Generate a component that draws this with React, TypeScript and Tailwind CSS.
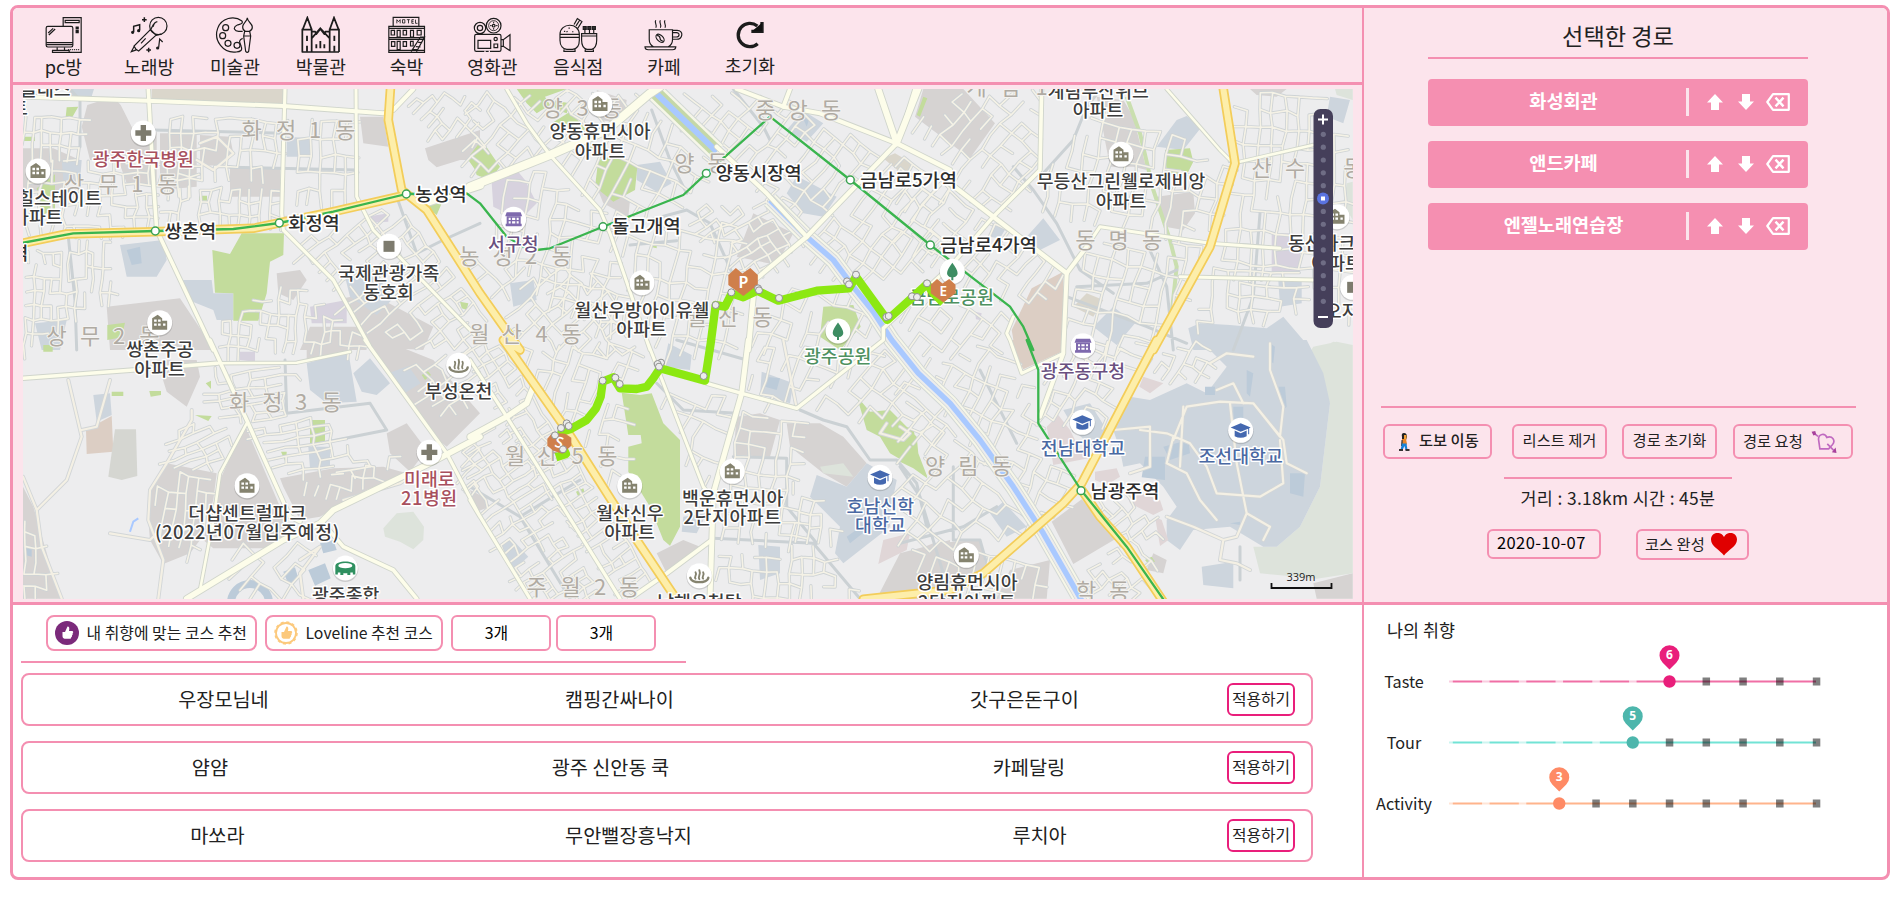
import React from "react";

const FONT = "font-['Noto_Sans_CJK_KR','Noto_Sans',sans-serif]";

/* ---------- map geometry ---------- */

// Map data is digitised per sheet, three units to a pixel; each sheet has its own origin.
const SHEETS: Record<string, [number, number]> = {
  A: [0, 80],
  B: [470, 80],
  C: [900, 80],
  D: [0, 340],
  E: [470, 340],
  F: [900, 340],
};

type Pt = [number, number];

function pts(src: string): Pt[] {
  let o = SHEETS.A;
  const out: Pt[] = [];
  for (const tok of src.trim().split(/\s+/)) {
    if (SHEETS[tok]) {
      o = SHEETS[tok];
      continue;
    }
    const [x, y] = tok.split(",").map(Number);
    out.push([o[0] + x / 3, o[1] + y / 3]);
  }
  return out;
}

const line = (src: string) =>
  "M" + pts(src).map((p) => `${p[0].toFixed(1)} ${p[1].toFixed(1)}`).join("L");
const area = (src: string) => line(src) + "Z";

const AREAS: [string, string[]][] = [
  ["#dad6cb", ["A 455,27 850,27 850,75 455,62", "C 520,680 560,640 610,660 580,710", "B 1240,235 1275,220 1335,255 1300,285"]],
  [
    "#d6d3d2",
    [
      "A 262,75 340,50 362,75 400,150 470,155 470,320 380,310 355,240 270,240 245,140",
      "A 480,160 590,160 590,320 480,330",
      "A 600,165 690,170 700,220 670,255 600,258",
      "A 690,262 840,265 840,350 690,350",
      "A 1080,110 1150,110 1165,200 1090,190",
      "A 1275,205 1440,150 1440,240 1380,240 1310,262 1285,240",
      "A 69,205 160,205 240,240 180,330 69,330",
      "A 320,680 540,655 610,760 640,810 330,810",
      "A 830,580 900,570 920,600 880,660 835,640",
      "A 1030,655 1110,640 1300,740 1270,810 1110,800",
      "A 930,740 1080,740 1100,810 900,810",
      "D 470,60 590,60 600,110 560,200 500,155",
      "D 920,0 1080,0 1040,36 920,60",
      "D 1100,20 1150,0 1300,60 1440,220 1340,320 1290,280 1200,130",
      "D 735,255 840,500 860,580 800,625 640,625 610,600 660,420 700,330",
      "D 840,415 1000,385 1150,380 1220,400 1100,450 960,530 900,540 850,440",
      "D 448,450 500,370 650,400 640,480 600,600 570,640 490,672 450,600 443,520",
      "D 1160,280 1220,250 1280,330 1230,395 1170,340",
      "D 69,440 100,500 180,776 69,776",
      "B 0,155 30,180 20,230 0,245",
      "B 380,320 420,345 480,360 475,410 400,370",
      "B 850,400 970,460 920,555 800,530",
      "C 70,27 190,27 285,130 210,235 45,110",
      "C 590,50 670,60 700,110 740,270 700,260 630,260",
      "C 770,350 880,335 885,400 850,450 795,440",
      "C 1050,27 1160,27 1130,50 1070,45",
      "E 800,230 870,220 930,240 900,350 790,345",
      "E 950,250 1050,250 1120,290 1190,370 1130,440 1060,400 960,320",
      "E 560,640 640,600 690,620 590,700",
      "E 0,450 40,470 60,500 20,515",
      "E 1290,640 1440,600 1440,776 1220,776",
      "F 455,545 545,478 650,595 520,672",
      "F 0,650 100,610 240,600 260,690 150,770 0,770",
      "F 330,690 450,660 440,776 290,776",
      "F 760,640 800,660 790,700 740,690",
      "F 1240,730 1358,700 1358,776 1250,776",
      "B 380,30 470,60 460,130 390,120",
    ],
  ],
  [
    "#dde3db",
    [
      "F 1215,60 1240,20 1310,5 1358,15 1358,700 1250,716 1080,700 1060,620 1130,620 1200,560 1260,440 1290,190",
      "C 1305,27 1358,27 1358,60 1310,45",
      "C 1340,310 1358,305 1358,420 1330,370",
      "C 1250,810 1300,785 1358,795 1358,810",
      "D 1150,565 1190,520 1240,515 1272,560 1270,600 1240,628 1200,605 1155,590",
      "E 1050,380 1120,370 1150,410 1060,400",
    ],
  ],
  [
    "#cdd5dd",
    [
      "C 865,745 900,730 990,735 1100,745 1150,710 1235,810 880,810",
      "F 900,0 1220,0 1270,100 1290,190 1260,440 1200,560 1130,620 1090,620 990,560 880,570 840,630 800,600 800,540 830,500 790,440 720,370 670,380 660,330 640,270 690,170 750,180 860,130 920,160 980,80",
      "A 360,495 490,480 500,540 470,590 380,590",
      "A 545,600 635,600 640,640 700,640 700,720 650,720 640,690 565,660",
      "A 860,170 935,175 930,230 860,230",
      "A 185,240 245,240 240,305 190,300",
      "A 200,27 282,27 270,65 210,55",
      "A 1035,590 1110,570 1185,650 1130,705 1050,650",
      "A 105,730 200,720 180,810 125,810",
      "D 920,70 1045,35 1070,185 980,190 930,150",
      "D 1060,100 1110,55 1170,130 1130,165 1085,155",
      "D 1165,100 1225,78 1262,130 1205,165",
      "D 925,320 990,320 990,380 930,385",
      "D 280,165 330,160 335,225 290,245",
      "B 500,255 570,245 605,310 560,335 500,300",
      "B 950,150 1000,92 1060,130 1010,185",
      "B 950,340 980,288 1100,350 1060,410 1000,400",
      "B 120,610 190,600 200,660 130,680",
      "C 770,200 830,120 860,108 905,140 850,210",
      "C 265,470 290,430 320,440 300,475",
      "C 380,470 430,415 480,480 420,510",
      "C 1135,600 1205,600 1205,670 1140,680",
      "C 580,740 640,680 705,730 650,795",
      "C 1290,50 1350,60 1330,130 1280,110",
      "E 595,10 665,45 660,90 580,80",
      "E 875,95 970,130 960,190 870,165",
      "E 1040,405 1130,440 1190,370 1280,420 1260,520 1260,560 1120,670 1095,640 1110,560 1020,470",
      "E 865,615 930,620 930,700 870,720",
      "E 120,590 175,650 130,690 88,620",
      "E 640,530 710,520 680,580 635,575",
      "F 270,520 310,485 380,560 320,590",
      "F 905,680 1000,665 1000,745 910,735",
      "F 490,210 570,190 620,270 590,330 530,280",
    ],
  ],
  ["#dccec4", ["C 395,625 490,575 490,810 345,810 335,750", "F 325,0 485,0 485,35 370,88", "D 258,270 335,228 340,335 260,342"]],
  ["#e0d6d7", ["F 440,260 475,225 510,270 540,330 590,350 460,375", "F 585,395 650,385 660,410 620,435 585,420", "F 670,440 780,480 790,510 760,525 690,490", "F 730,110 790,130 750,160 718,140", "F 765,530 785,540 805,600 780,618", "E 1240,600 1320,580 1310,630 1225,672"]],
  ["#d7d2de", ["B 65,310 140,270 165,300 200,370 150,420 70,380", "C 1115,460 1200,460 1200,580 1115,580", "A 930,680 1040,660 1040,730 935,730", "A 1100,410 1165,400 1165,425 1110,428", "D 720,35 765,35 765,65 720,60", "C 225,695 245,700 240,720 228,718"]],
  [
    "#c3dc9c",
    [
      "A 637,510 690,522 725,460 852,460 850,525 810,545 800,640 775,722 700,722 700,640 645,638",
      "A 110,325 165,283 165,390 125,405",
      "A 69,170 105,170 105,183 69,183",
      "A 200,82 235,80 215,115 197,110",
      "A 597,347 621,347 621,362 597,362",
      "A 322,735 375,728 365,772 322,780",
      "A 1405,240 1440,195 1440,290",
      "A 1285,360 1325,370 1310,405 1290,390",
      "A 1380,665 1405,670 1400,690 1385,685",
      "A 1030,665 1045,665 1090,755 1080,760",
      "D 930,240 975,240 975,310 930,312",
      "D 130,15 158,15 158,35 130,35",
      "D 335,155 370,155 370,168 335,168",
      "D 448,153 483,153 483,165 452,170",
      "D 585,225 635,228 625,243",
      "D 617,130 633,122 633,147",
      "D 1265,105 1283,93 1293,105 1275,120",
      "D 843,335 860,335 858,370",
      "B 0,225 35,180 90,260 60,300 20,285",
      "B 140,27 290,27 225,50 240,75 200,100 170,70",
      "B 240,60 300,70 290,100 260,90",
      "B 245,130 300,95 350,150 290,155",
      "B 330,190 390,190 400,210 340,215",
      "B 385,240 440,225 502,262 495,330 430,365 375,320",
      "B 1340,105 1360,50 1372,55 1350,110",
      "B 1060,680 1150,675 1172,740 1110,810 1050,770",
      "B 540,500 560,488 560,505",
      "C 795,210 870,205 880,245 860,285 800,280",
      "E 455,158 510,165 545,160 580,250 630,300 630,560 600,617 580,600 540,500 475,395 475,320 515,310 512,285 475,285",
      "E 1160,168 1200,215 1260,210 1340,290 1345,340 1372,410 1320,375 1260,340 1230,290 1190,270",
      "E 318,455 340,445 345,460 325,470",
      "F 0,258 40,265 55,340 82,415 40,385 0,365",
      "F 735,660 755,650 765,665 745,672",
    ],
  ],
  ["#bccbd9", ["D 850,695 885,682 895,715 865,732", "D 925,690 975,670 992,715 945,737", "D 960,610 1000,600 1010,630 970,640", "D 70,620 95,620 95,650 75,645", "F 735,350 795,350 795,420 725,412", "F 790,320 865,300 870,340 810,360", "F 1000,200 1030,200 1030,280 1000,280", "F 1170,400 1215,400 1210,470 1170,460", "F 1135,140 1155,140 1160,200 1150,210", "F 915,140 945,140 945,165 915,165", "F 990,550 1020,545 1020,555", "A 380,510 420,500 425,550 395,555", "B 995,105 1020,110 1010,140", "E 885,110 930,115 920,150 885,140", "E 1130,590 1200,540 1210,555 1140,610", "F 1040,90 1060,100 1050,170 1040,160", "F 1110,10 1125,20 1120,70 1105,60"]],
];

const MAJOR: [number, string][] = [
  [4, "A 69,50 440,62 850,78 1150,100 1180,90 1240,27"],
  [3.6, "A 445,27 460,300 470,450 640,810 D 630,0 740,240 870,530 900,545"],
  [3.2, "A 855,27 845,400 850,450 1000,600 1110,800 D 1095,0 1340,340 1440,530 E 0,480 180,776"],
  [3, "A 1068,27 1070,350 1120,450 1440,780"],
  [3.2, "E 0,60 110,230 450,776"],
  [5.5, "D 560,776 850,600 960,550 1000,510 1290,370 1440,290 E 0,290 110,230 170,190 190,140"],
  [8, "A 1270,370 1440,315 B 0,320 240,225 410,150 540,40 570,20"],
  [3.6, "D 69,115 400,90 650,70"],
  [2.6, "D 650,70 890,68 1050,35"],
  [3.6, "D 970,550 1030,620 1180,690 1250,776"],
  [2.6, "D 600,750 640,540 660,400 740,250"],
  [3, "B 110,27 170,130 240,225 390,390 420,460 540,810 E 530,0 700,440 725,470"],
  [5, "B 850,650 835,810 E 835,0 815,160 730,460 720,776"],
  [3.4, "E 710,130 815,160 980,205 1240,0 B 1240,745 1440,560 C 280,410"],
  [4.4, "B 830,620 1010,470 1280,190"],
  [6, "B 1225,27 1280,190 1345,27"],
  [4, "B 1280,190 1050,100 940,80 800,27"],
  [4, "B 940,80 960,27"],
  [4, "B 740,200 890,340 1010,470"],
  [4.4, "B 1280,190 1440,270 C 150,310 280,410 500,580"],
  [3.6, "C 45,27 0,170"],
  [3.6, "C 280,410 420,270 425,27"],
  [4, "C 560,500 500,580 490,810 F 490,40 420,230"],
  [3, "F 490,40 365,100 330,0 C 320,760 340,710"],
  [3, "C 560,500 600,440 930,490 1140,505"],
  [2.6, "C 800,27 960,210 1000,250"],
  [2.6, "C 1000,250 1240,195"],
  [3, "C 840,590 1240,600"],
  [4, "E 725,600 590,700 480,776"],
];

const MINOR: string[] = [
  "D 69,410 110,510 125,620 185,776",
  "D 110,510 200,420 245,290 205,120",
  "D 245,270 290,260 330,120",
  "D 575,210 575,240 500,370 450,450 445,540 490,660 475,776",
  "D 330,580 450,600 470,580",
  "F 720,270 800,280 870,310 920,380 950,460 1080,470 1150,430 1140,300",
  "F 820,300 860,200 960,185 1060,190 1140,290",
  "F 990,190 1010,370 1040,520 1010,590 970,600 880,560 800,530",
  "F 1110,10 1110,90 1150,200 1140,290",
  "F 1060,190 1150,300 1160,370 1220,400",
  "F 820,290 800,370 860,400 900,480 950,540",
  "F 970,600 960,660 1010,670 1050,690",
  "F 640,270 750,260 750,380 690,400",
  "F 950,150 1000,130 1030,190",
  "F 930,70 980,40 1060,50",
  "F 1040,520 1110,560 1090,600",
  "F 850,200 840,380",
  "D 900,660 960,620 900,700 910,776",
  "E 940,0 980,205",
  "D 1030,480 1200,430 1290,370",
  "A 600,190 650,170 700,220 640,270 590,240",
  "E 1290,260 1320,280 1300,300 1230,280 1250,250",
];

const GREY_ROADS: string[] = [
  "B 790,27 880,140 900,180",
  "B 545,90 600,240 650,340",
  "B 480,495 620,482",
  "B 540,420 650,390 720,430 760,520 800,610",
  "C 430,280 520,180 560,80 600,30",
  "A 205,470 225,660 230,810",
  "A 460,150 850,160",
  "A 690,262 1070,270",
  "A 210,27 240,60 240,200",
  "A 1190,350 1250,520 1330,480 1440,430",
  "D 855,60 860,220 1110,190",
  "D 1110,190 1160,270 960,310",
  "E 0,440 150,530 300,776",
  "E 150,530 330,420",
  "E 730,595 1030,610 1170,776",
  "E 990,210 1060,240 1130,260 1200,360 1280,360 1340,430 1370,560",
  "F 0,380 60,470 130,700",
  "F 0,610 190,560 290,500",
  "F 240,90 310,230 350,310",
  "C 500,650 740,740 860,790",
  "C 340,260 400,330 470,430 540,570 640,640",
  "C 530,620 740,610 830,570",
  "C 740,490 800,620 820,810",
  "E 620,0 830,60",
  "E 560,130 640,210 800,220",
  "E 790,350 950,355 950,500 1040,610",
  "F 160,380 160,600 240,600 290,776",
  "F 1020,620 1020,720",
  "C 1080,400 1060,650 1000,810",
];

const YELLOW: string[] = [
  "A 60,491 200,462 460,455 760,445 1000,395 1219,345",
  "A 1172,15 1165,120 1205,330 1280,390 1440,640 B 150,810 E 100,0 290,270 500,600 625,786",
  "C 968,15 1005,250 930,500 760,810 F 770,0 545,430 490,490 250,700 E 1440,750 1180,778",
  "F 545,450 600,530 680,620 790,785",
];

const RIVER = "B 900,360 1010,470 1090,540 1150,620 1210,695 E 1265,0 1345,100 1440,190 F 150,190 240,300 340,440 430,580 550,790";
const RIVER_TOP = "B 545,27 740,215";
const SUBWAY =
  "A 60,490 220,460 466,453 700,447 838,429 1000,395 1219,342 1400,340 1440,370 B 110,470 160,500 200,510 240,505 399,440 640,345 709,280 900,110 1141,300 1381,495 C 200,580 330,680 370,740 400,810 F 380,0 415,90 415,250 543,450 680,620 795,785";
const STATIONS = pts("A 466,453 838,429 1219,342 B 399,440 709,280 1141,300 C 91,495 F 543,452");

const ROUTE =
  "E 258,352 288,342 268,300 275,275 300,268 350,240 378,205 392,170 398,125 430,112 450,145 500,147 530,140 550,115 570,85 705,122 B 722,790 737,675 765,680 785,640 820,652 862,632 925,662 1040,632 1137,625 1158,590 1252,720 1330,650 1371,612 C 100,640 130,668";
const NODES = pts(
  "E 279,328 255,286 290,250 273,264 296,258 398,122 436,113 449,132 573,68 563,72 567,80 701,108 B 737,675 784,637 864,625 867,631 927,654 1131,604 1137,613 1158,584 1249,711 1256,708 1326,649 1341,651 1371,610"
);

// Fine street network: jittered grids kept inside each district.
const DISTRICTS: [string, number, number, number][] = [
  ["A 69,70 240,80 240,240 69,240", 3, 10, 16],
  ["A 480,80 840,90 840,250 600,300 480,330", 2, 13, 17],
  ["A 480,270 840,330 840,420 480,440", 2, 11, 14],
  ["A 69,240 460,240 460,440 69,450", 1, 13, 12],
  ["A 69,500 200,480 320,480 340,640 230,680 69,810", 2, 9, 15],
  ["A 870,100 1060,110 1060,330 870,370", 2, 13, 19],
  ["A 880,470 1200,360 1440,690 1440,810 1130,780", 52, 12, 16],
  ["A 640,730 860,600 1080,760 1080,810 640,810", 5, 10, 14],
  ["A 1230,40 1440,30 1440,190 1300,150", 42, 10, 13],
  ["D 590,80 900,80 900,250 740,240 640,200", 82, 9, 18],
  ["D 540,250 720,250 640,420 520,380", 68, 9, 17],
  ["D 760,240 920,220 1080,300 1120,390 850,400", 80, 9, 18],
  ["D 450,390 650,400 620,600 500,650", 8, 11, 20],
  ["D 900,420 1200,340 1180,400 950,480", 8, 12, 14],
  ["D 1200,60 1440,20 1440,200 1300,200", 52, 12, 16],
  ["D 690,600 960,600 900,776 720,776", 40, 14, 20],
  ["D 69,500 120,600 170,776 69,776", 2, 12, 15],
  ["D 1350,290 1440,270 1440,500", 48, 10, 14],
  ["B 0,30 530,30 370,140 230,220 0,290", 43, 12, 16],
  ["B 80,300 230,240 400,420 500,780 150,620 60,420", 10, 14, 17],
  ["B 0,520 380,560 500,810 160,800", 48, 13, 17],
  ["B 260,210 540,60 720,230 600,400 420,400", 25, 15, 19],
  ["B 580,30 900,30 1220,200 1000,450 760,230", 40, 13, 17],
  ["B 430,440 780,420 830,620 800,810 560,810", 12, 14, 19],
  ["B 650,380 900,350 1000,480 840,610", 60, 10, 14],
  ["B 1000,500 1290,220 1440,320 1440,520 1160,600", 38, 14, 18],
  ["B 840,640 1180,600 1250,760 850,810", 22, 16, 20],
  ["C 50,120 280,400 420,270 420,30 200,30", 40, 14, 17],
  ["C 0,200 270,410 100,540 0,450", 38, 12, 16],
  ["C 430,280 600,40 960,220 990,260 900,490 600,430 440,400", 12, 15, 19],
  ["C 290,420 500,590 350,690 160,560", 38, 13, 16],
  ["C 500,600 600,450 920,500 760,780 640,810 500,780", 14, 15, 19],
  ["C 970,30 1230,30 1358,240 1358,700 1200,580 950,560", 4, 14, 19],
  ["C 950,530 1210,590 1200,700 880,730 860,700", 4, 15, 15],
  ["C 0,620 330,700 330,810 60,810", 36, 14, 18],
  ["E 0,0 90,0 270,290 480,600 600,776 460,776 120,230 0,50", 57, 11, 14],
  ["E 0,300 110,240 430,776 190,776 0,470", 57, 10, 13],
  ["E 130,0 520,10 560,140 450,110 300,240", 18, 13, 17],
  ["E 340,220 460,160 470,380 400,400", 15, 11, 18],
  ["E 560,130 800,160 720,450", 22, 15, 17],
  ["E 830,20 1240,20 980,200 840,160", 20, 14, 17],
  ["E 780,200 980,220 980,600 740,590", 8, 15, 16],
  ["E 740,610 1040,615 1170,776 740,776", 3, 13, 15],
  ["E 1000,200 1260,20 1440,200 1440,330 1200,210", 40, 15, 20],
  ["E 960,400 1050,480 1110,600 980,600", 8, 12, 16],
  ["F 60,60 240,0 320,0 410,230 540,440 430,560", 25, 13, 17],
  ["F 0,110 240,320 420,580 240,600 0,610", 38, 17, 19],
  ["F 440,80 620,0 740,0 620,250 430,230", 28, 13, 15],
  ["F 690,60 900,0 940,80 870,130", 28, 11, 13],
  ["F 570,480 690,450 800,540 760,680 690,600", 50, 11, 13],
  ["F 540,700 660,620 770,776 560,776", 52, 11, 14],
  ["F 0,620 250,620 440,680 430,776 160,776", 15, 14, 20],
];

function inside([x, y]: Pt, poly: Pt[]) {
  let hit = false;
  for (let i = 0, j = poly.length - 1; i < poly.length; j = i++) {
    const [xi, yi] = poly[i];
    const [xj, yj] = poly[j];
    if (yi > y !== yj > y && x < ((xj - xi) * (y - yi)) / (yj - yi) + xi) hit = !hit;
  }
  return hit;
}

function streetPath(src: string, deg: number, sx: number, sy: number, seed: number) {
  const poly = pts(src);
  let s = seed * 7919 + 13;
  const rnd = () => ((s = (s * 16807) % 2147483647) / 2147483647);
  const cx = poly.reduce((a, p) => a + p[0], 0) / poly.length;
  const cy = poly.reduce((a, p) => a + p[1], 0) / poly.length;
  const c = Math.cos((deg * Math.PI) / 180);
  const n = Math.sin((deg * Math.PI) / 180);
  const grid: Record<string, Pt> = {};
  const at = (i: number, j: number): Pt => {
    const k = `${i},${j}`;
    if (!grid[k]) {
      const u = i * sx + (rnd() - 0.5) * sx * 0.35;
      const v = j * sy + (rnd() - 0.5) * sy * 0.3;
      grid[k] = [cx + u * c - v * n, cy + u * n + v * c];
    }
    return grid[k];
  };
  let d = "";
  for (let i = -16; i < 16; i++)
    for (let j = -12; j < 12; j++) {
      const a = at(i, j);
      if (!inside(a, poly)) continue;
      const r = at(i + 1, j);
      const b = at(i, j + 1);
      if (rnd() < 0.66) d += `M${a[0].toFixed(1)} ${a[1].toFixed(1)}L${r[0].toFixed(1)} ${r[1].toFixed(1)}`;
      if (rnd() < 0.76) d += `M${a[0].toFixed(1)} ${a[1].toFixed(1)}L${b[0].toFixed(1)} ${b[1].toFixed(1)}`;
    }
  return d;
}

const STREETS = DISTRICTS.map(([p, deg, a, b], i) => streetPath(p, deg, a * 0.92, b * 0.9, i + 1)).join("");

// [sheet position, text, tone]; positions are the centre of the text
const LABELS: [string, string, string][] = [
  ["A 430,240", "광주한국병원", "#a8505e"],
  ["A 178,357", "힐스테이트", "#3c3c3c"],
  ["A 112,415", "아파트", "#3c3c3c"],
  ["A 136,32", "클래스", "#3c3c3c"],
  ["A 58,88", "트", "#3c3c3c"],
  ["A 60,522", "역", "#2f2f2f"],
  ["A 1166,583", "국제관광가족", "#3c3c3c"],
  ["A 1166,641", "동호회", "#3c3c3c"],
  ["D 480,32", "쌍촌주공", "#3c3c3c"],
  ["D 479,90", "아파트", "#3c3c3c"],
  ["B 390,158", "양동휴먼시아", "#3c3c3c"],
  ["B 390,216", "아파트", "#3c3c3c"],
  ["B 130,496", "서구청", "#6a5080"],
  ["B 516,693", "월산우방아이유쉘", "#3c3c3c"],
  ["B 515,751", "아파트", "#3c3c3c"],
  ["C 155,655", "금남로공원", "#4e9160"],
  ["C 595,36", "계림두산위브", "#3c3c3c"],
  ["C 594,94", "아파트", "#3c3c3c"],
  ["C 663,308", "무등산그린웰로제비앙", "#3c3c3c"],
  ["C 663,366", "아파트", "#3c3c3c"],
  ["C 1265,494", "동산파크", "#3c3c3c"],
  ["C 1310,552", "아파트", "#3c3c3c"],
  ["C 1325,698", "오지", "#3c3c3c"],
  ["D 1376,158", "부성온천", "#3c3c3c"],
  ["D 1288,420", "미래로", "#a8505e"],
  ["D 1288,478", "21병원", "#a8505e"],
  ["D 742,522", "더샵센트럴파크", "#3c3c3c"],
  ["D 742,580", "(2022년07월입주예정)", "#3c3c3c"],
  ["D 1037,770", "광주종합", "#3c3c3c"],
  ["E 480,522", "월산신우", "#3c3c3c"],
  ["E 479,580", "아파트", "#3c3c3c"],
  ["E 788,477", "백운휴먼시아", "#3c3c3c"],
  ["E 788,535", "2단지아파트", "#3c3c3c"],
  ["E 688,790", "남해온천탕", "#3c3c3c"],
  ["E 1103,52", "광주공원", "#4e9160"],
  ["E 1231,503", "호남신학", "#4a69a3"],
  ["E 1231,559", "대학교", "#4a69a3"],
  ["F 549,96", "광주동구청", "#6a5080"],
  ["F 549,328", "전남대학교", "#4a69a3"],
  ["F 1022,352", "조선대학교", "#4a69a3"],
  ["F 201,730", "양림휴먼시아", "#3c3c3c"],
  ["F 201,790", "2단지아파트", "#3c3c3c"],
];

const STATION_LABELS: [string, string][] = [
  ["A 571,456", "쌍촌역"],
  ["A 942,431", "화정역"],
  ["A 1323,344", "농성역"],
  ["B 529,441", "돌고개역"],
  ["B 866,281", "양동시장역"],
  ["B 1316,303", "금남로5가역"],
  ["C 266,498", "금남로4가역"],
  ["F 675,455", "남광주역"],
];

const DISTRICT_LABELS: [string, string][] = [
  ["A 755,152 858,152 945,152 1036,152", "화정1동"],
  ["A 222,312 325,312 412,312 502,312", "상무1동"],
  ["A 170,770 270,770 357,770 448,770", "상무2동"],
  ["B -2,530 98,530 183,530 275,530", "농성2동"],
  ["B 248,84 338,84 425,84", "양3동"],
  ["B 643,250 743,250", "양동"],
  ["B 886,92 983,92 1083,92", "중앙동"],
  ["B 28,762 125,762 215,762 305,762", "월산4동"],
  ["B 680,712 775,712 878,712", "월산동"],
  ["C 230,22 330,22 425,22", "계림1"],
  ["C 1085,264 1185,264 1360,264", "산수동"],
  ["C 556,480 656,480 756,480", "동명동"],
  ["D 717,187 817,187 903,187 995,187", "화정3동"],
  ["E 135,348 232,348 323,348 412,348", "월산5동"],
  ["E 200,742 302,742 390,742 478,742", "주월2동"],
  ["F 105,378 205,378 305,378", "양림동"],
  ["F 558,755 658,755", "학동"],
];

const POIS: [string, string][] = [
  ["A 430,159", "plus"],
  ["A 114,273", "apt"],
  ["A 1167,499", "square"],
  ["A 479,728", "apt"],
  ["B 390,72", "apt"],
  ["B 131,418", "hall"],
  ["B 516,608", "apt"],
  ["B 1104,753", "tree"],
  ["C 157,574", "tree"],
  ["C 663,223", "apt"],
  ["C 1311,410", "apt"],
  ["C 1358,622", "square"],
  ["F 549,17", "hall"],
  ["F 547,247", "school"],
  ["F 1022,271", "school"],
  ["F 199,646", "apt"],
  ["D 1376,76", "spa"],
  ["D 1288,337", "plus"],
  ["D 741,437", "apt"],
  ["D 1036,684", "stadium"],
  ["E 479,437", "apt"],
  ["E 787,394", "apt"],
  ["E 1230,412", "school"],
  ["E 688,707", "spa"],
];

function PoiGlyph({ kind }: { kind: string }) {
  switch (kind) {
    case "plus":
      return <path d="M-2.700-8h5.400v5.300H8v5.400H2.700V8h-5.400V2.700H-8v-5.400h5.300z" fill="#7d7b6e" />;
    case "square":
      return <rect x="-5.500" y="-5.500" width="11" height="11" fill="#7d7b6e" />;
    case "apt":
      return (
        <g>
          <path d="M-7.500 7V-4.500L-2-8l4.500 3.500V-2h5V7z" fill="#85836f" />
          <path d="M-5.600-3.200h2.600v2.400h-2.600zM-1.600-3.200H1v2.400h-2.600zM-5.600.8h2.600v2.400h-2.600zM-1.600.8H1v2.400h-2.600zM3.400.8h2.400v2.400H3.400z" fill="#fff" />
        </g>
      );
    case "hall":
      return (
        <g fill="#7f6aae">
          <path d="M-7-7H7l1.500 4h-17z" />
          <path d="M-8 4.500H8V7H-8zM-7-3H7V5H-7z" />
          <path d="M-5-1.500h2V.6h-2zM-1.600-1.500h3.200V.6h-3.200zM3-1.500h2V.6H3zM-5 2h2v2.100h-2zM-1.600 2h3.200v2.100h-3.200zM3 2h2v2.100H3z" fill="#fff" />
        </g>
      );
    case "tree":
      return <path d="M0-8.500C3-4.500 5.300-1 5.300 2 5.300 4.400 3.400 5.800 1 6v3h-2V6C-3.400 5.800-5.300 4.400-5.300 2-5.300-1-3-4.500 0-8.500z" fill="#3d8d63" />;
    case "school":
      return <path d="M0-7l10 4.200L8.500-2V4h-1V-1.600L0 1.500-10-2.800zM-6 .2L0 2.900 6 .2V6C2 8-2 8-6 6z" fill="#4468b0" />;
    case "spa":
      return (
        <g fill="none" stroke="#85836f" strokeWidth="1.900" strokeLinecap="round">
          <path d="M-9 2C-8.500 8 8.500 8 9 2" strokeWidth="2.400" />
          <path d="M-3.800 3c-2-2 2-3.500 0-6.500M0 3.500c-2-2.500 2-4.500 0-9M3.800 3c-2-2 2-3.500 0-6.500" />
        </g>
      );
    default:
      return (
        <g>
          <path d="M-10-2C-10-8 10-8 10-2V6.500H7.500V4.500H5V7H2V5.200h-4V7h-3V4.500h-2.500v2H-10z" fill="#2f9060" />
          <ellipse cx="0" cy="-2.300" rx="7" ry="2.600" fill="#fff" />
        </g>
      );
  }
}

function Pin({ at, letter, scale = 1 }: { at: string; letter: string; scale?: number }) {
  const [x, y] = pts(at)[0];
  return (
    <g transform={`translate(${x} ${y}) scale(${scale})`}>
      <path d="M-15-7L-7.500-14-1-8.500 7-14l7.500 7V3L0 14-15 3z" fill="#cf7f4b" />
      <text x="0" y="6" textAnchor="middle" className="fill-white font-['Noto_Sans'] text-[16px] font-semibold">
        {letter}
      </text>
    </g>
  );
}

function CityMap() {
  return (
    <svg className="block h-[510px] w-[1330px]" viewBox="23 89 1330 510">
      <rect x="23" y="89" width="1330" height="510" fill="#ededee" />
      {AREAS.map(([fill, list]) => (
        <path key={fill} d={list.map(area).join("")} fill={fill} />
      ))}
      <circle cx="250" cy="603" r="19" fill="none" stroke="#bccbd9" strokeWidth="8" />
      <path d={area("D 345,268 408,268 412,408 365,420 325,410")} fill="#d5d6d1" />
      <path d={line("C 680,50 720,160 760,330 810,480 830,560 815,700")} stroke="#cadfaf" strokeWidth="4" fill="none" />
      <path d={line("D 390,575 400,545 415,535")} stroke="#a9c9ff" strokeWidth="2" fill="none" />
      <g fill="none" strokeLinejoin="round" strokeLinecap="round">
        <path d={STREETS} stroke="#ced3d5" strokeWidth="3.300" />
        <path d={MINOR.map(line).join("")} stroke="#d2d6d8" strokeWidth="4" />
        <path d={GREY_ROADS.map(line).join("")} stroke="#cbd1d4" strokeWidth="3" />
        <path d={STREETS} stroke="#f5f2e6" strokeWidth="1.600" />
        <path d={MINOR.map(line).join("")} stroke="#f4f0e4" strokeWidth="2.200" />
        <path d={line(RIVER)} stroke="#d3d8d6" strokeWidth="17" strokeLinecap="butt" />
        <path d={line(RIVER)} stroke="#f6f6e8" strokeWidth="15" strokeLinecap="butt" />
        <path d={line(RIVER)} stroke="#d3d8d6" strokeWidth="11" strokeLinecap="butt" />
        <path d={line(RIVER)} stroke="#ececec" strokeWidth="9.500" strokeLinecap="butt" />
        <path d={line(RIVER)} stroke="#a9c9ff" strokeWidth="5.500" strokeLinecap="butt" />
        <path d={line(RIVER_TOP)} stroke="#d3d8d6" strokeWidth="20" strokeLinecap="butt" />
        <path d={line(RIVER_TOP)} stroke="#f6f6e8" strokeWidth="18" strokeLinecap="butt" />
        <path d={line(RIVER_TOP)} stroke="#c5d8a8" strokeWidth="13" strokeLinecap="butt" />
        <path d={line(RIVER_TOP)} stroke="#a9c9ff" strokeWidth="6" strokeLinecap="butt" />
        {MAJOR.map(([w, p]) => (
          <path key={p} d={line(p)} stroke="#d0d5cc" strokeWidth={w + 1.8} />
        ))}
        {MAJOR.map(([w, p]) => (
          <path key={p} d={line(p)} stroke="#fdfdea" strokeWidth={w} />
        ))}
        <path d={YELLOW.map(line).join("")} stroke="#f3cd5a" strokeWidth="9.500" />
        <path d={YELLOW.map(line).join("")} stroke="#fdeeaa" strokeWidth="6" />
        <path d={line(SUBWAY)} stroke="#3ab54e" strokeWidth="2.300" />
      </g>
      {STATIONS.map(([x, y]) => (
        <circle key={`${x}`} cx={x} cy={y} r="3.900" fill="#fff" stroke="#3ba352" strokeWidth="1.500" />
      ))}

      <g className="font-['Noto_Sans_CJK_KR']" textAnchor="middle" strokeLinejoin="round">
        {DISTRICT_LABELS.map(([p, text]) => {
          const ps = pts(p);
          return (
            <text key={p} y={ps[0][1] + 7.5} x={ps.map((q) => q[0]).join(" ")} fontSize="22" fill="#b0aba3" stroke="#f3f2f0" strokeWidth="2" paintOrder="stroke">
              {text}
            </text>
          );
        })}
        {LABELS.map(([p, text, tone]) => {
          const [x, y] = pts(p)[0];
          const spacing = /^[(2]/.test(text) ? 0.6 : 0.05;
          return (
            <text key={p} x={x} y={y + 5.8} fontSize="18.300" letterSpacing={spacing} fontWeight="500" fill={tone} stroke="#fff" strokeWidth="3" paintOrder="stroke">
              {text}
            </text>
          );
        })}
        {POIS.map(([p, kind]) => {
          const [x, y] = pts(p)[0];
          return (
            <g key={p} transform={`translate(${x} ${y})`}>
              <circle cy="1" r="13" fill="#000" opacity="0.140" />
              <circle r="12.500" fill="#fff" />
              <PoiGlyph kind={kind} />
            </g>
          );
        })}
        {STATION_LABELS.map(([p, text]) => {
          const [x, y] = pts(p)[0];
          return (
            <text key={p} x={x} y={y + 6} fontSize="18.700" fontWeight="500" fill="#2d2d2d" stroke="#fff" strokeWidth="3.500" paintOrder="stroke">
              {text}
            </text>
          );
        })}
      </g>

      <path d={line(ROUTE)} fill="none" stroke="#8ce812" strokeWidth="8.300" strokeLinejoin="round" />
      <Pin at="B 820,606" letter="P" />
      <Pin at="C 130,632" letter="E" scale={0.84} />
      <g transform={`translate(${pts("E 268,305")[0].join(" ")})`}>
        <path d="M-12-3L-7-9 6-8 12-4V4L3 12-6 9-12 4z" fill="#cf7f4b" />
        <text y="6" textAnchor="middle" transform="rotate(14)" className="fill-white font-['Noto_Sans'] text-[15px] font-semibold">
          S
        </text>
      </g>
      {NODES.map(([x, y], i) => (
        <circle key={i} cx={x} cy={y} r="3.500" fill="#ececec" stroke="#8f8f8f" strokeWidth="1" />
      ))}

      <g>
        <rect x="1313.500" y="109" width="19.500" height="219" rx="7" fill="#453f5a" />
        <path d="M1323 114.500v10M1318 119.500h10M1318 317h10" stroke="#fff" strokeWidth="2" />
        {Array.from({ length: 14 }, (_, i) => (
          <circle key={i} cx="1323.300" cy={134.3 + i * 12.85} r="2.600" fill="#6f6d85" />
        ))}
        <circle cx="1323" cy="198.500" r="6" fill="#5a73e0" />
        <rect x="1321" y="196.500" width="4" height="4" fill="#fff" />
      </g>
      <path d="M1271.500 583v5h60v-5" fill="none" stroke="#111" strokeWidth="1.800" />
      <text x="1301" y="581" textAnchor="middle" fontSize="11" fill="#222" className="font-['Open_Sans']">
        339m
      </text>
    </svg>
  );
}

/* ---------- toolbar icons ---------- */

const ICONS: Record<string, [string, React.ReactNode]> = {
  pc: [
    "134 51 114 114",
    <>
      <path d="M190 82V56h54v104h-46M166 160h-8v-6h50v6zM172 145v9M194 145v9" />
      <rect x="139" y="82" width="80" height="62" rx="5" />
      <path d="M139 131h80M139 137h80M196 64h42v7h-42zM145 102l15-14M147 108l19-18" />
      <path d="M229 84h6v6h-6zM229 95h6v6h-6z" fill="#111" />
      <path d="M205 152h36" strokeDasharray="3 3" />
    </>,
  ],
  mic: [
    "391 51 117 114",
    <>
      <circle cx="476" cy="81" r="26" />
      <path d="M453 91l-50 50 6 10 8 5 54-49M462 75l-9 17 17 17 15-4M403 143l-8 15 17-6M424 133l14-15M461 83q1-13 12-15" />
      <path d="M434 55v14M427 62h14M447 146v14M440 153h14M402 99V82l18-5v17" strokeWidth="4.500" />
      <circle cx="399" cy="100" r="3" fill="#111" />
      <circle cx="417" cy="95" r="3" fill="#111" />
      <path d="M477 145l3-25 9 9" />
      <circle cx="474" cy="147" r="3" fill="#111" />
    </>,
  ],
  palette: [
    "649 51 117 114",
    <>
      <path d="M730 66c-24-18-62-9-73 22-13 37 17 76 56 71 14-1 18-6 15-15-3-12-12-19 4-26M730 66c4 8-5 9-14 12-16 8-8 20 6 19h10" />
      <circle cx="681" cy="86" r="9" />
      <circle cx="672" cy="110" r="9" />
      <circle cx="688" cy="133" r="9" />
      <circle cx="715" cy="139" r="9" />
      <path d="M746 56c0 13 15 17 15 28 0 7-4 11-9 13h-12c-6-3-8-7-8-13 0-12 14-17 14-28zM738 97l-3 14 6 46q5 6 9 0l6-46-3-14M735 111h21" />
    </>,
  ],
  museum: [
    "907 51 117 114",
    <g strokeWidth="5.200">
      <path d="M911 159V92h28v67M993 159V92h28v67M909 159h112M912 92l14-36 13 36M993 92l13-36 14 36M939 118l26-30 28 30M939 112V98h10l5 6 11-14 11 14 5-6h12" />
      <path d="M925 110v16M1007 110v16M925 140v18M1007 140v18M953 136v12M965 126v22M977 136v12" strokeWidth="5.500" />
    </g>,
  ],
  motel: [
    "1165 51 114 114",
    <>
      <path d="M1182 80V55h77v25M1169 160V82h107v78zM1169 88h107M1169 116h107M1169 121h107M1169 154h107" />
      <path d="M1176 94h10v14h-10zM1194 94h9v20h-9zM1212 94h10v14h-10zM1234 94h9v20h-9zM1254 94h12v14h-12zM1177 128h10v14h-10zM1194 127h9v25h-9zM1212 128h10v14h-10zM1234 127h8v14h-8z" />
      <path d="M1236 158l28-44h12l-24 44M1250 143l14 1M1257 130l12 1M1241 152h14" />
      <path d="M1193 73V62l5 6 5-6v11M1210 62h7v10h-7zM1223 62h9M1228 62v11M1244 62h-6v11h6M1238 67h5M1249 62v11h6" strokeWidth="2.500" />
    </>,
  ],
  movie: [
    "103 51 117 114",
    <>
      <circle cx="165" cy="80" r="22" />
      <circle cx="165" cy="80" r="15" strokeWidth="2.500" />
      <circle cx="165" cy="80" r="4" />
      <circle cx="124" cy="87" r="17" />
      <circle cx="124" cy="87" r="8" />
      <path d="M154 80h5M171 80h6M165 68v5M165 87v5" strokeWidth="3" />
      <rect x="108" y="106" width="79" height="51" rx="5" />
      <path d="M118 124h38v24h-38zM187 122h7l20-15v48l-20-13h-7M194 122v20" />
      <path d="M137 157h4M150 157h4" stroke="#fce4ec" strokeWidth="5" />
      <circle cx="171" cy="120" r="5" />
      <path d="M166 135h11v11h-11z" />
    </>,
  ],
  food: [
    "358 51 119 114",
    <>
      <path d="M361 106v18c0 18 10 27 21 28h17c12-1 21-10 21-28v-18zM361 115h59M373 152v6h34v-6M361 106c0-36 59-38 59 0M404 76l10-18 14 9-13 21M410 80l11-17" />
      <path d="M373 97h4M387 87h4M398 98h4M381 99l3-3" />
      <path d="M427 104h46v20c0 16-7 25-15 28h-15c-10-3-16-12-16-28zM427 111h46M438 152v6h25v-6M437 104V92M451 104V92M464 104V92" />
      <path d="M432 82h9v9h-9zM446 82h9v9h-9zM460 82h9v9h-9z" fill="#333" />
    </>,
  ],
  cafe: [
    "616 51 119 114",
    <>
      <path d="M632 92h71v30c0 10-5 18-13 22h-45c-8-4-13-12-13-22zM703 94h14c22 0 17 27-2 27h-13M703 101h12c12 0 9 13 0 13h-12M619 144h94c0 6-4 9-10 9h-74c-6 0-10-3-10-9z" />
      <ellipse cx="665" cy="118" rx="9" ry="15" transform="rotate(-45 665 118)" />
      <path d="M656 109q9 2 9 9t9 9M652 63c-6 8 6 14 0 23M666 63c-6 8 6 14 0 23M680 63c-6 8 6 14 0 23" />
    </>,
  ],
  reset: [
    "874 58 117 114",
    <g strokeWidth="10">
      <path d="M957 141a35 35 0 1 1-1-53" />
      <path d="M938 104h32V76" strokeWidth="10" />
      <path d="M940 104l30-26v26z" fill="#111" stroke="none" />
    </g>,
  ],
};

const TOOLS = [
  { id: "pc", label: "pc방" },
  { id: "mic", label: "노래방" },
  { id: "palette", label: "미술관" },
  { id: "museum", label: "박물관" },
  { id: "motel", label: "숙박" },
  { id: "movie", label: "영화관" },
  { id: "food", label: "음식점" },
  { id: "cafe", label: "카페" },
  { id: "reset", label: "초기화" },
];

function Toolbar() {
  return (
    <div className="flex h-[77px] border-b-[3px] border-[#f48fb1] pl-[7.500px] pt-[8px]">
      {TOOLS.map((t) => (
        <button key={t.id} className="flex w-[85.800px] flex-col items-center">
          <svg viewBox={ICONS[t.id][0]} className="h-[38px] w-[39px]" fill="none" stroke="#1c1c1c" strokeWidth="3.600">
            {ICONS[t.id][1]}
          </svg>
          <span className={t.id === "reset" ? "mt-[-2px] text-[18.200px] leading-[26px]" : "mt-[-1px] text-[18.200px] leading-[26px]"}>{t.label}</span>
        </button>
      ))}
    </div>
  );
}

/* ---------- selected route ---------- */

function RouteCard({ name }: { name: string }) {
  return (
    <div className="flex h-[46.500px] w-[380px] items-center rounded bg-[#f58fb1] text-white">
      <div className="w-[258px] pb-[5px] pl-[13px] text-center text-[18.600px] font-bold leading-[26px]">{name}</div>
      <div className="h-[28px] w-[3px] bg-[#fbe4ec]" />
      <svg viewBox="0 0 16 16" className="ml-[17.500px] h-4 w-4" fill="#fff">
        <path d="M8 0l8 8.500h-4V16H4V8.500H0z" />
      </svg>
      <svg viewBox="0 0 16 16" className="ml-[15.500px] h-4 w-4" fill="#fff">
        <path d="M8 16L0 7.500h4V0h8v7.500h4z" />
      </svg>
      <svg viewBox="0 0 24 18" className="ml-[11.500px] h-[18px] w-6" fill="none" stroke="#fff" strokeWidth="2.200" strokeLinejoin="round">
        <path d="M7 1.200h15.800v15.600H7L1.300 9z" />
        <path d="M9.500 4.600l8 8.800M17.500 4.600l-8 8.800" strokeWidth="2.400" />
      </svg>
    </div>
  );
}

const OUTLINE = "flex items-center rounded-md border-2 border-[#f48fb1]";

function SelectedRoute() {
  return (
    <section className="flex h-[597px] flex-col items-center border-b-[3px] border-[#f48fb1] bg-[#fce4ec] pr-[15px]">
      <h2 className="h-[49px] pt-[10px] text-[23.200px] leading-[34px]">선택한 경로</h2>
      <div className="h-[2px] w-[380px] bg-[#f48fb1]" />
      <div className="mt-5 flex h-[327px] flex-col gap-[15.500px]">
        <RouteCard name="화성회관" />
        <RouteCard name="앤드카페" />
        <RouteCard name="엔젤노래연습장" />
      </div>
      <div className="h-[2px] w-[475px] bg-[#f48fb1]" />
      <div className="mt-4 flex h-[35px] text-[15.300px]">
        <button className={`${OUTLINE} mr-[20px] w-[109px] pl-[13px] font-medium`}>
          <svg viewBox="0 0 12 20" className="mr-[9px] h-5 w-3">
            <path d="M4 5Q3 1 6 1t3 4l-1 3H4z" fill="#222" />
            <path d="M6 3h2.500v4H6z" fill="#f3a13a" />
            <path d="M4 7h4l1 5-1 1H4z" fill="#e8862a" />
            <path d="M3.500 8h1.200v6H3z" fill="#3d3d3d" />
            <path d="M4 11.500h4.500l1 6.500H7.500l-1-4-2 4H2.500z" fill="#1683d8" />
            <path d="M1 17h4v2H1zM7.500 17h4v2h-4z" fill="#333" />
          </svg>
          <span className="whitespace-nowrap pb-[5px]">도보 이동</span>
        </button>
        <button className={`${OUTLINE} mr-[15px] w-[95px] justify-center whitespace-nowrap pb-[5px]`}>리스트 제거</button>
        <button className={`${OUTLINE} mr-[16px] w-[95px] justify-center whitespace-nowrap pb-[5px]`}>경로 초기화</button>
        <button className={`${OUTLINE} w-[120px] pl-2`}>
          <span className="whitespace-nowrap pb-[2px]">경로 요청</span>
          <svg viewBox="0 0 28 26" className="ml-[8px] h-6 w-[27px]" fill="none" stroke="#c06ac0" strokeWidth="1.800">
            <path d="M9 20.500L7.500 10c0-6 7-7 9-2 6-2 10 3 6 8l-4 4.500z" />
            <path d="M2 3l5 4M17 15l7 7" />
            <path d="M0 2l4-1 1 4-3 1zM22 24l5 1-1-6z" fill="#a8409c" stroke="none" />
          </svg>
        </button>
      </div>
      <div className="mt-[18px] h-[2px] w-[228px] bg-[#f48fb1]" />
      <p className="mt-[6px] whitespace-nowrap text-[17.400px] leading-[26px] tracking-[0.350px]">거리 : 3.18km 시간 : 45분</p>
      <div className="mt-[18px] flex text-[15.300px]">
        <div className={`${OUTLINE} mr-[35px] h-[30px] w-[114px] pb-[3px] pl-2 text-[16.500px] tracking-[0.400px] text-black`}>2020-10-07</div>
        <button className={`${OUTLINE} h-[31px] w-[113px] pl-[7px]`}>
          <span className="whitespace-nowrap pb-[2px]">코스 완성</span>
          <svg viewBox="0 0 26 23" className="ml-[6px] h-[23px] w-[26px]" fill="#e00000">
            <path d="M13 22.500C9 17 0 13.500 0 6.500 0-1 10-2.500 13 4c3-6.500 13-5 13 2.500 0 7-9 10.500-13 16z" />
          </svg>
        </button>
      </div>
    </section>
  );
}

/* ---------- recommendations ---------- */

const COURSES = [
  { id: 1, names: ["우장모님네", "캠핑간싸나이", "갓구은돈구이"] },
  { id: 2, names: ["얌얌", "광주 신안동 쿡", "카페달링"] },
  { id: 3, names: ["마쏘라", "무안뻘장흥낙지", "루치아"] },
];

const THUMB = "M-4.500-1h2.500L.5-6.500C2.500-6.500 2.600-4.500 2-2H5c1.500 0 1.500 2 .6 2.300.5 1-.1 1.900-.6 2 .3 1-.2 1.800-.8 1.900 0 1-.6 1.500-1.700 1.500h-5C-4 5.500-4.500 4-4.500 3z";

function Recommendations() {
  return (
    <section className="h-[272px] pl-[8px] pt-[10px]">
      <div className="flex h-9 pl-[24.500px] text-[15.900px]">
        <button className={`${OUTLINE} mr-[8px] w-[211px] !rounded-lg pl-[7px]`}>
          <svg viewBox="-12 -12 24 24" className="mr-[8px] h-6 w-6">
            <circle r="12" fill="#7b2a7b" />
            <path d={THUMB} fill="#fff" />
          </svg>
          <span className="whitespace-nowrap">내 취향에 맞는 코스 추천</span>
        </button>
        <button className={`${OUTLINE} mr-[8px] w-[178px] !rounded-lg pl-[7px]`}>
          <svg viewBox="-12 -12 24 24" className="mr-[8px] h-6 w-6">
            <circle r="10" fill="none" stroke="#fcc97c" strokeWidth="1.800" />
            <circle r="11" fill="none" stroke="#fcc97c" strokeWidth="1.500" strokeDasharray="3 2.760" />
            <path d={THUMB} fill="#fcc97c" />
          </svg>
          <span className="whitespace-nowrap text-[15.800px]">Loveline 추천 코스</span>
        </button>
        <div className={`${OUTLINE} mr-[5px] w-[100px] justify-center pb-[1px] pr-2 text-black`}>3개</div>
        <div className={`${OUTLINE} w-[100px] justify-center pb-[1px] pr-2 text-black`}>3개</div>
      </div>
      <div className="mt-[10px] h-[2px] w-[665px] bg-[#f48fb1]" />
      <div className="mt-[10px] flex flex-col gap-[15px]">
        {COURSES.map((c) => (
          <div key={c.id} className="flex h-[53px] w-[1292px] items-center justify-between rounded-lg border-2 border-[#f48fb1] pr-[16px] text-[19.700px]">
            <div className="flex flex-1 justify-around pb-[2px] pl-[7px]">
              {c.names.map((n) => (
                <span key={n}>{n}</span>
              ))}
            </div>
            <button className="h-[33px] w-[68px] whitespace-nowrap rounded-md border-2 border-[#e91e7b] pb-[2px] text-[15.800px]">적용하기</button>
          </div>
        ))}
      </div>
    </section>
  );
}

/* ---------- preferences ---------- */

const PREFS = [
  { name: "Taste", value: 6, thumb: "#e91e7b", track: "#f06fa5" },
  { name: "Tour", value: 5, thumb: "#4db6ac", track: "#72e3d5" },
  { name: "Activity", value: 3, thumb: "#ff8a65", track: "#ffb48c" },
];

function PrefSlider({ value, thumb, track }: { value: number; thumb: string; track: string }) {
  const step = 36.75;
  const x = value * step + 4;
  return (
    <svg className="block h-[61px] w-[380px]" viewBox="0 0 380 61">
      <path d="M4 46.500H371" stroke={track} strokeWidth="2" />
      {Array.from({ length: 11 }, (_, i) =>
        i < value ? (
          <rect key={i} x={i * step + 0.3} y="42.500" width="7.500" height="8" fill="#fff" opacity="0.650" />
        ) : i > value ? (
          <rect key={i} x={i * step + 0.3} y="42.500" width="7.500" height="8" fill="#000" opacity="0.500" />
        ) : null
      )}
      <circle cx={x} cy="46.500" r="6.200" fill={thumb} />
      <path d={`M${x} 34.500L${x - 7} 27.500A10 10 0 1 1 ${x + 7} 27.500Z`} fill={thumb} />
      <text x={x} y="24" textAnchor="middle" className="fill-white font-['Noto_Sans'] text-[12px] font-bold">
        {value}
      </text>
    </svg>
  );
}

function Preferences() {
  return (
    <section className="h-[272px] pt-[12px]">
      <h3 className="h-[18px] pl-[23px] text-[17.400px] leading-[25px]">나의 취향</h3>
      {PREFS.map((p) => (
        <div key={p.name} className="flex h-[61.200px]">
          <div className="w-[80px] pt-[34px] text-center text-[16.200px] leading-6 text-[#222]">{p.name}</div>
          <div className="pl-[1px]">
            <PrefSlider value={p.value} thumb={p.thumb} track={p.track} />
          </div>
        </div>
      ))}
    </section>
  );
}

export default function App() {
  return (
    <div className={`h-[898px] w-[1895px] overflow-hidden bg-white pl-[10px] pt-[5px] text-[#212121] ${FONT}`}>
      <main className="flex h-[875px] w-[1880px] overflow-hidden rounded-[8px] border-[3px] border-[#f48fb1]">
        <div className="w-[1351px] border-r-2 border-[#f48fb1]">
          <div className="h-[597px] border-b-[3px] border-[#f48fb1] bg-[#fce4ec]">
            <Toolbar />
            <div className="pl-[10px] pt-[4px]">
              <CityMap />
            </div>
          </div>
          <Recommendations />
        </div>
        <div className="flex-1">
          <SelectedRoute />
          <Preferences />
        </div>
      </main>
    </div>
  );
}
